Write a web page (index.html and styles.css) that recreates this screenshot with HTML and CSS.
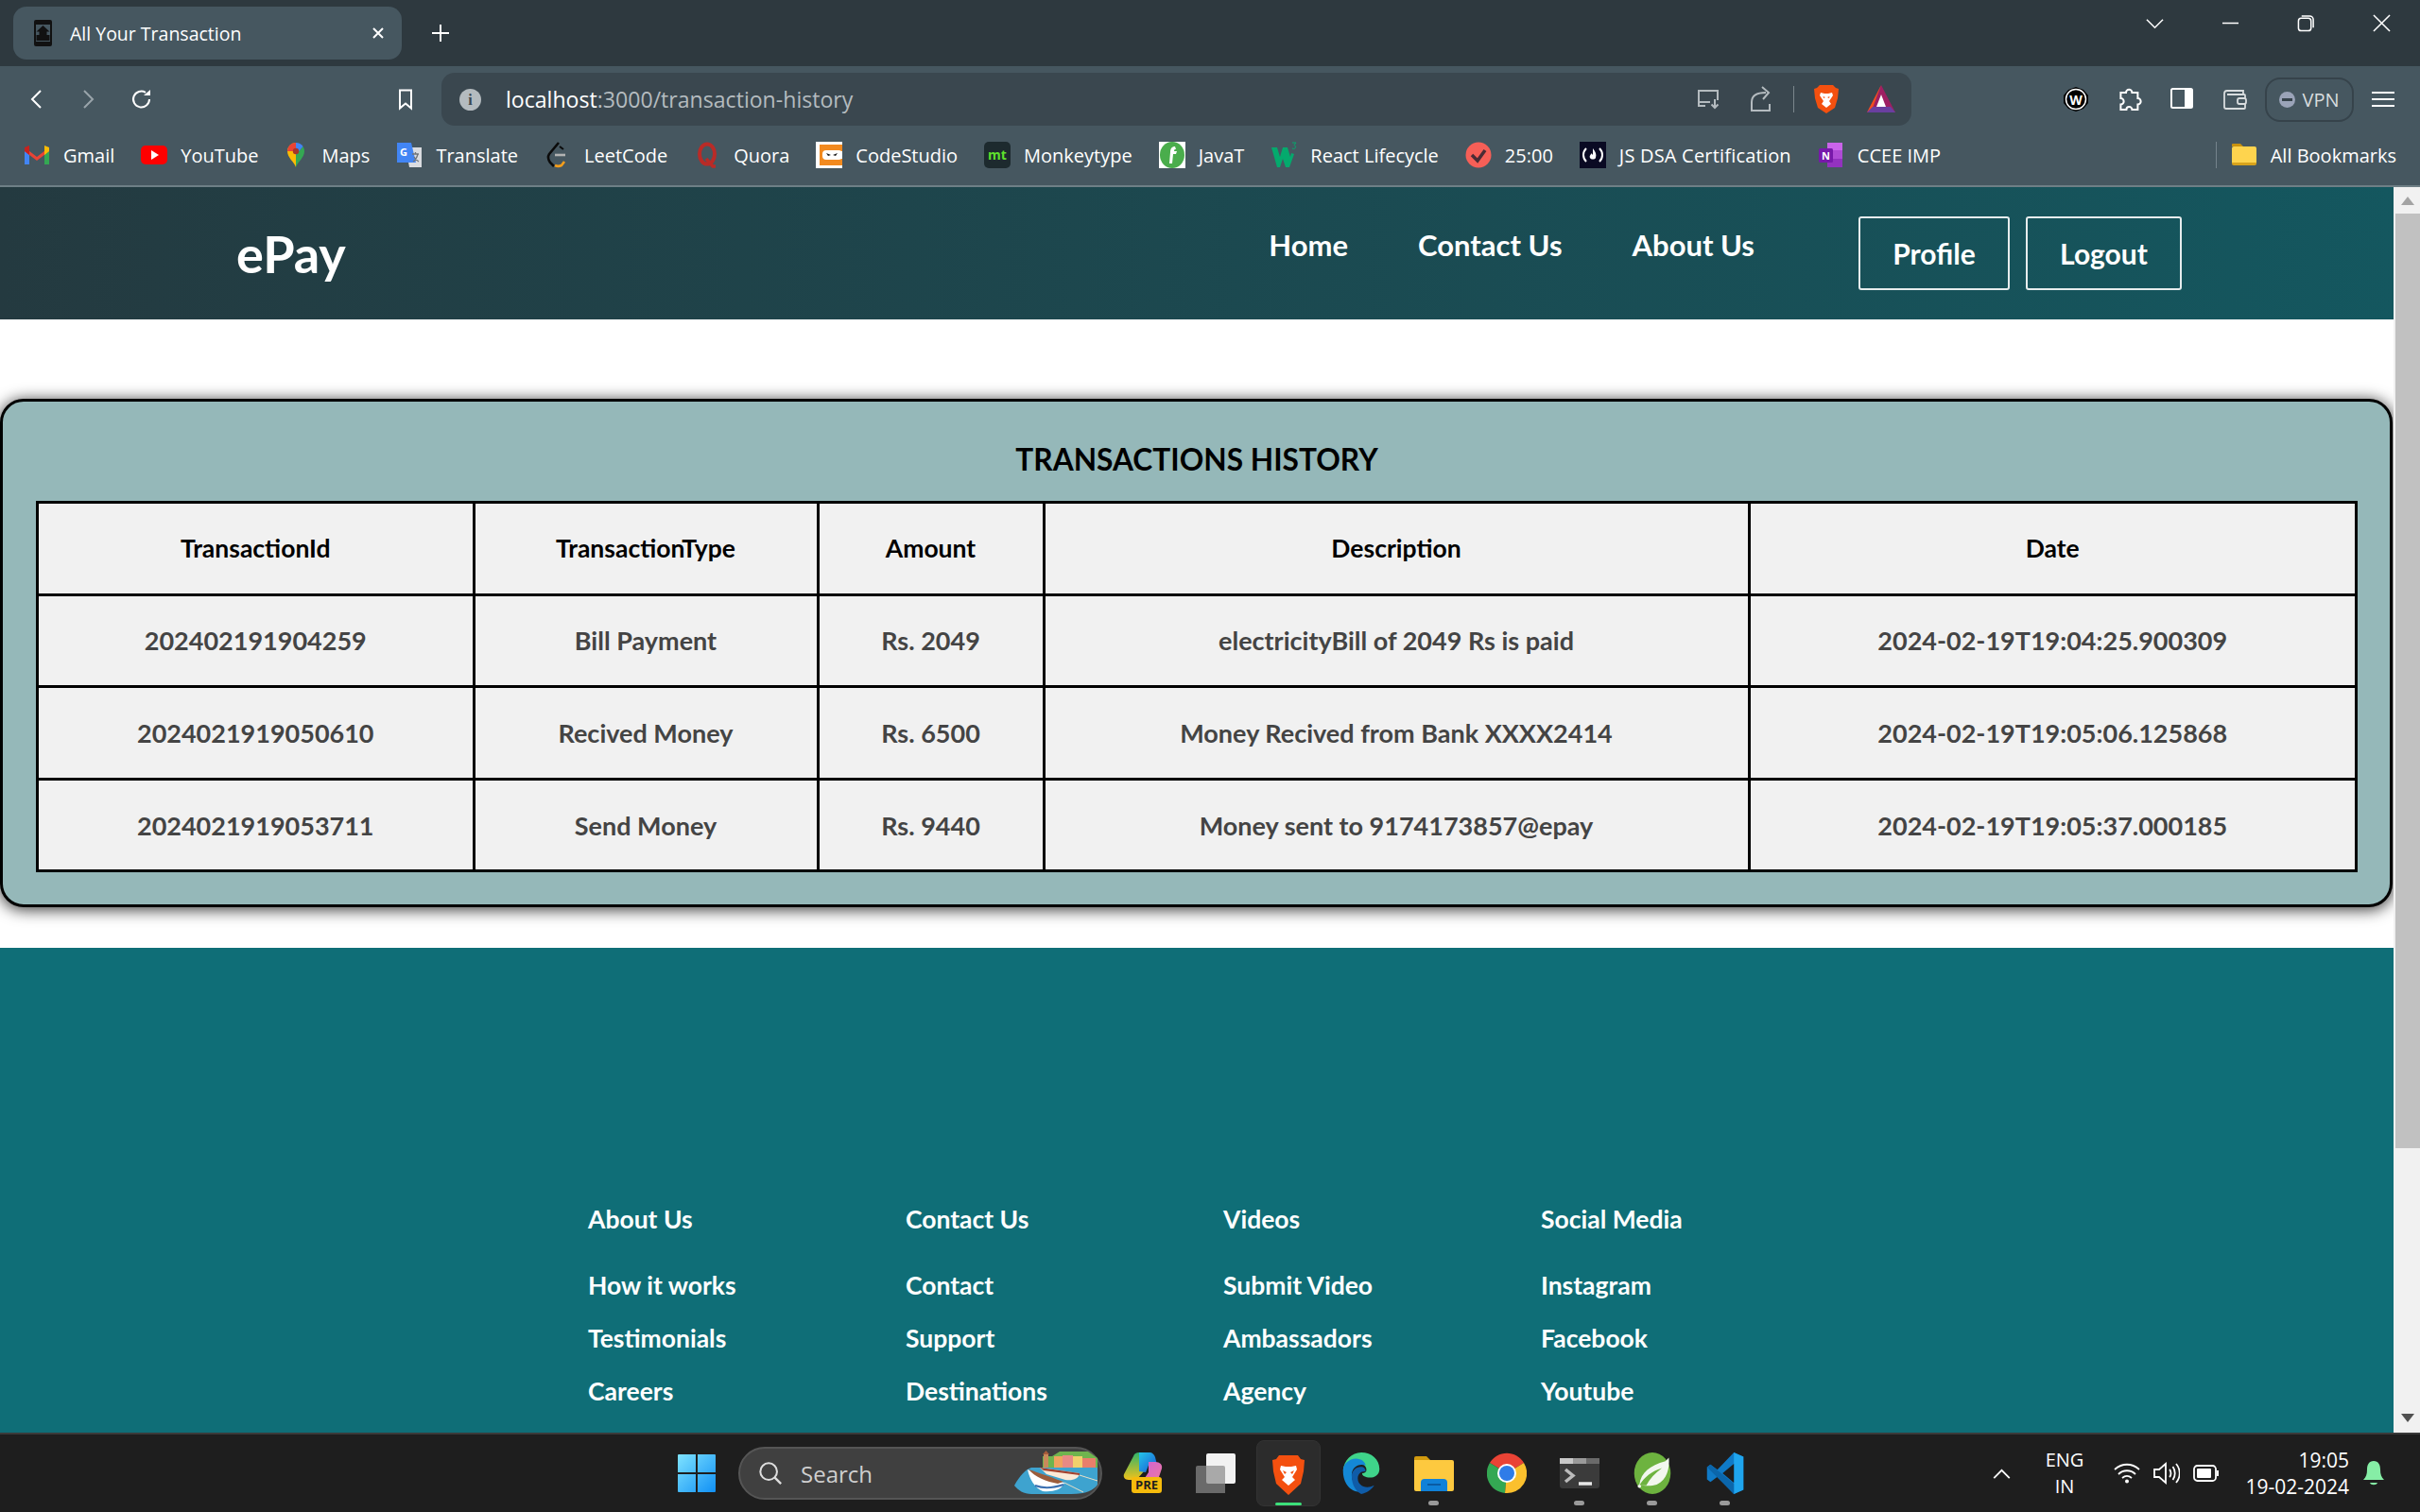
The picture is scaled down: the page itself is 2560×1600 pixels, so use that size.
FILE: index.html
```html
<!DOCTYPE html>
<html lang="en">
  <head>
    <meta charset="UTF-8" />
    <title>All Your Transaction</title>
    <link rel="stylesheet" href="styles.css">
  </head>
  <body>
    <div class="titlebar">
      <div class="tab">
        <svg class="tab-icon" viewBox="0 0 21 28"><path d="M3 1h15a1 1 0 0 1 1 1v24a1 1 0 0 1-1 1H3a1 1 0 0 1-1-1V2a1 1 0 0 1 1-1z" fill="none" stroke="#111" stroke-width="2"/><path d="M2 2h17v3H2zM2 23h17v3H2z" fill="#111"/><path d="M10.500 6l7 6.500h-3V16h3v6h-14v-6h3v-3.500h-3z" fill="#111"/></svg>
        <span class="tab-title">All Your Transaction</span>
        <svg class="tab-close" viewBox="0 0 14 14"><path d="M2 2l10 10M12 2L2 12" stroke="#fff" stroke-width="2"/></svg>
      </div>
      <svg class="new-tab" viewBox="0 0 20 20"><path d="M10 1v18M1 10h18" stroke="#fff" stroke-width="2"/></svg>
      <div class="window-controls">
        <svg viewBox="0 0 20 20"><path d="M1 6l9 9 9-9" fill="none" stroke="#fff" stroke-width="1.6"/></svg>
        <svg viewBox="0 0 20 20"><path d="M1 10h18" stroke="#fff" stroke-width="1.6"/></svg>
        <svg viewBox="0 0 20 20"><rect x="1.5" y="4.5" width="14" height="14" rx="3" fill="none" stroke="#fff" stroke-width="1.6"/><path d="M5 2h9a4 4 0 0 1 4 4v9" fill="none" stroke="#fff" stroke-width="1.6"/></svg>
        <svg viewBox="0 0 20 20"><path d="M1 1l18 18M19 1L1 19" stroke="#fff" stroke-width="1.6"/></svg>
      </div>
    </div>

    <div class="toolbar">
      <svg class="tool tool-back" viewBox="0 0 24 24"><path d="M16 3l-9 9 9 9" fill="none" stroke="#fff" stroke-width="2"/></svg>
      <svg class="tool tool-forward" viewBox="0 0 24 24"><path d="M8 3l9 9-9 9" fill="none" stroke="#99a4aa" stroke-width="2"/></svg>
      <svg class="tool tool-reload" viewBox="0 0 24 24"><path d="M20 12a8.500 8.500 0 1 1-4-7.200" fill="none" stroke="#fff" stroke-width="2"/><path d="M14 8h7V2z" fill="#fff"/></svg>
      <svg class="tool tool-bookmark" viewBox="0 0 24 24"><path d="M6 2.500h12v19l-6-5-6 5z" fill="none" stroke="#fff" stroke-width="2"/></svg>
      <div class="addressbar">
        <span class="info-dot">i</span>
        <span class="url"><b>localhost</b>:3000/transaction-history</span>
        <div class="address-actions">
          <svg class="addr-cast" viewBox="0 0 28 28"><path d="M11 21H4V5h20v10M4 17h12" fill="none" stroke="#b4bbbf" stroke-width="2"/><path d="M21 14v9m-3.500-3.500l3.500 3.500 3.500-3.500" fill="none" stroke="#b4bbbf" stroke-width="2"/></svg>
          <svg class="addr-share" viewBox="0 0 28 28"><path d="M4 26h20v-7M5 25V17c0-6 5-10 15-10" fill="none" stroke="#b4bbbf" stroke-width="2"/><path d="M16 1l7 6-6 7" fill="none" stroke="#b4bbbf" stroke-width="2"/></svg>
          <span class="addr-sep"></span>
          <svg class="addr-brave" viewBox="0 0 28 32"><path d="M7 1h14l3 3 3 1-1 10-3 10-9 6-9-6-3-10L1 5l3-1z" fill="#f4500f"/><path d="M8 9l4 1h4l4-1 1 3-4 6 2 3-5 4-5-4 2-3-4-6z" fill="#fff"/><path d="M10.500 13l2.500 1-2 1zM17.500 13l-2.500 1 2 1z" fill="#f4500f"/></svg>
          <svg class="addr-rewards" viewBox="0 0 32 32"><path d="M16 1L31 30H1z" fill="#9e1f63"/><path d="M16 1L1 30l6-5z" fill="#f0501e"/><path d="M1 30h30l-5-6H7z" fill="#6a3fa0"/><path d="M16 11l5 13H11z" fill="#fff"/></svg>
        </div>
      </div>
      <div class="toolbar-right">
        <svg class="tool-ext" viewBox="0 0 28 28"><path d="M14 1l8 3 5 6v8l-5 6-8 3-8-3-5-6v-8l5-6z" fill="#000"/><circle cx="14" cy="14" r="10.500" fill="none" stroke="#fff" stroke-width="1.500"/><text class="wolf-text" x="14" y="19.500" text-anchor="middle">W</text></svg>
        <svg class="tool-ext" viewBox="0 0 28 28"><path d="M11 7a3.200 3.200 0 1 1 6.400 0h6v6a3 3 0 1 1 0 6.500v5.500h-6a3 3 0 0 0-6 0h-6v-5.500a3.200 3.200 0 0 0 0-6.500V7z" fill="none" stroke="#fff" stroke-width="2"/></svg>
        <svg class="tool-ext" viewBox="0 0 28 28"><rect x="3" y="3" width="22" height="20" rx="1.500" fill="none" stroke="#fff" stroke-width="2"/><rect x="17" y="3" width="8" height="20" fill="#fff"/></svg>
        <svg class="tool-ext" viewBox="0 0 28 28"><path d="M3 8a3 3 0 0 1 3-3h17v4M3 8v14a2 2 0 0 0 2 2h19a1 1 0 0 0 1-1V10a1 1 0 0 0-1-1H6" fill="none" stroke="#d8dcde" stroke-width="1.800"/><rect x="17" y="13" width="9" height="6" rx="2" fill="#465760" stroke="#d8dcde" stroke-width="1.800"/></svg>
        <div class="vpn"><span class="vpn-dot"></span>VPN</div>
        <svg class="tool-menu" viewBox="0 0 24 18"><path d="M0 2h24M0 9h24M0 16h24" stroke="#fff" stroke-width="1.800"/></svg>
      </div>
    </div>

    <div class="bookmarks">
      <a class="bm bm-gmail"><svg viewBox="0 0 28 28"><path d="M1 8v16h5V12z" fill="#4285f4"/><path d="M22 12v12h5V8z" fill="#34a853"/><path d="M1 6l13 10L27 6v4L14 20 1 10z" fill="#ea4335"/><path d="M22 4l5 2v4l-5 4z" fill="#fbbc04"/><path d="M1 6l5-2v10l-5-4z" fill="#c5221f"/></svg>Gmail</a>
      <a class="bm bm-yt"><svg viewBox="0 0 28 28"><rect y="4" width="28" height="20" rx="5" fill="#f00"/><path d="M11 9l8 5-8 5z" fill="#fff"/></svg>YouTube</a>
      <a class="bm bm-maps"><svg viewBox="0 0 28 28"><path d="M14 27c-2-6-9-10-9-17a9 9 0 0 1 9-9z" fill="#fbbc04"/><path d="M14 27c2-6 9-10 9-17 0-2-.6-3.500-1.500-5L14 14z" fill="#34a853"/><path d="M14 1a9 9 0 0 1 7.500 4L14 14z" fill="#4285f4"/><path d="M7 4a9 9 0 0 1 7-3v9H5c0-2 1-4 2-6z" fill="#ea4335"/><circle cx="14" cy="10" r="3.200" fill="#a6342a"/></svg>Maps</a>
      <a class="bm bm-translate"><svg viewBox="0 0 28 28"><path d="M10 6h17v21H14z" fill="#dadce0"/><path d="M1 1h15l5 21H1z" fill="#4285f4"/><text class="gt-g" x="8" y="15" text-anchor="middle">G</text><path d="M17 13h7M20.500 11v2M18 21c3-2 4-4 5-8M19 16c1 2 3 4 5 5" fill="none" stroke="#70757a" stroke-width="1.300"/></svg>Translate</a>
      <a class="bm bm-leet"><svg viewBox="0 0 28 28"><path d="M15 1L5 13c-2 3-1 6 1 9l4 4" fill="none" stroke="#0b0b0b" stroke-width="2.600"/><path d="M20 8l-4-3" fill="none" stroke="#0b0b0b" stroke-width="2"/><path d="M21 21l-3 4c-2 1-5 1-7 0" fill="none" stroke="#f59e1c" stroke-width="2.600"/><path d="M11 14h11" stroke="#b3b3b3" stroke-width="2.600"/></svg>LeetCode</a>
      <a class="bm bm-quora"><svg viewBox="0 0 28 28"><ellipse cx="14" cy="13" rx="8" ry="10.500" fill="none" stroke="#b92b27" stroke-width="4"/><path d="M13 18l7 8h3" fill="none" stroke="#b92b27" stroke-width="3.500"/></svg>Quora</a>
      <a class="bm bm-cs"><svg viewBox="0 0 28 28"><rect width="28" height="28" fill="#fff"/><path d="M4 3h24v7H10c-2 0-2 2-2 4s0 4 2 4h18v7H4z" fill="#f28a1f"/><rect x="7" y="9" width="21" height="10" rx="4" fill="#fff"/><path d="M11 12l5 2-3 1zM23 12l-5 2 3 1z" fill="#1b1b1b"/></svg>CodeStudio</a>
      <a class="bm bm-mt"><svg viewBox="0 0 28 28"><rect width="28" height="28" rx="5" fill="#1d2a2e"/><text class="mt-text" x="14" y="19" text-anchor="middle">mt</text></svg>Monkeytype</a>
      <a class="bm bm-java"><svg viewBox="0 0 28 28"><rect width="28" height="28" fill="#fff"/><ellipse cx="14" cy="14" rx="13" ry="14" fill="#4aad4c"/><path d="M17 5c-3 0-5 2-5 6l-1 12h3l1-10h3l1-3h-3c0-2 1-2 2-2z" fill="#fff"/></svg>JavaT</a>
      <a class="bm bm-w3"><svg viewBox="0 0 28 28"><path d="M1 6h6l3 10 3-10h5l3 10 1-4 3 1-5 14h-4l-3-9-3 9H7z" fill="#04aa6d"/><path d="M23 1h4l-2 2.500c2 .5 2 4-.5 4l-1.500-.5" fill="none" stroke="#04aa6d" stroke-width="1"/></svg>React Lifecycle</a>
      <a class="bm bm-tomato"><svg viewBox="0 0 28 28"><circle cx="14" cy="14" r="13.500" fill="#f65f57"/><path d="M7 14l6 6 8-11" fill="none" stroke="#4a2c35" stroke-width="3.500"/></svg>25:00</a>
      <a class="bm bm-fcc"><svg viewBox="0 0 28 28"><rect width="28" height="28" fill="#0a0a23"/><path d="M7 7c-4 4-4 10 0 14M21 7c4 4 4 10 0 14" fill="none" stroke="#fff" stroke-width="2"/><path d="M14 7c3 4 4 6 3 10-1 2-5 2-6 0-1-2 1-4 2-5 0 2 1 2 1 1s0-3 0-6z" fill="#fff"/></svg>JS DSA Certification</a>
      <a class="bm bm-one"><svg viewBox="0 0 28 28"><path d="M10 1h16v26H10z" fill="#ca64ea"/><path d="M10 9h16v9H10z" fill="#ae4bd5"/><path d="M10 18h16v9H10z" fill="#9332bf"/><rect x="1" y="7" width="15" height="15" rx="1.500" fill="#7719aa"/><text class="one-n" x="8.500" y="19" text-anchor="middle">N</text></svg>CCEE IMP</a>
      <span class="bm-sep"></span>
      <a class="bm bm-all"><svg viewBox="0 0 28 28"><path d="M1 3a1 1 0 0 1 1-1h8l3 3H1z" fill="#c8920f"/><rect x="1" y="5" width="26" height="19" rx="2" fill="#fed44e"/><path d="M1 22h26v1a2 2 0 0 1-2 2H3a2 2 0 0 1-2-2z" fill="#d8a31c"/></svg>All Bookmarks</a>
    </div>

    <div class="viewport">
      <div class="page">
        <nav class="navbar">
          <a class="logo">ePay</a>
          <ul class="nav-links">
            <li>Home</li>
            <li>Contact Us</li>
            <li>About Us</li>
          </ul>
          <div class="nav-buttons">
            <button class="btn btn-profile">Profile</button>
            <button class="btn btn-logout">Logout</button>
          </div>
        </nav>

        <section class="history-card">
          <h2>TRANSACTIONS HISTORY</h2>
          <table class="history-table">
            <colgroup>
              <col class="col-id" /><col class="col-type" /><col class="col-amount" /><col class="col-desc" /><col class="col-date" />
            </colgroup>
            <thead>
              <tr>
                <th>TransactionId</th>
                <th>TransactionType</th>
                <th>Amount</th>
                <th>Description</th>
                <th>Date</th>
              </tr>
            </thead>
            <tbody>
              <tr>
                <td>202402191904259</td>
                <td>Bill Payment</td>
                <td>Rs. 2049</td>
                <td>electricityBill of 2049 Rs is paid</td>
                <td>2024-02-19T19:04:25.900309</td>
              </tr>
              <tr>
                <td>2024021919050610</td>
                <td>Recived Money</td>
                <td>Rs. 6500</td>
                <td>Money Recived from Bank XXXX2414</td>
                <td>2024-02-19T19:05:06.125868</td>
              </tr>
              <tr>
                <td>2024021919053711</td>
                <td>Send Money</td>
                <td>Rs. 9440</td>
                <td>Money sent to 9174173857@epay</td>
                <td>2024-02-19T19:05:37.000185</td>
              </tr>
            </tbody>
          </table>
        </section>

        <footer class="footer">
          <div class="footer-col">
            <h4>About Us</h4>
            <a>How it works</a>
            <a>Testimonials</a>
            <a>Careers</a>
          </div>
          <div class="footer-col">
            <h4>Contact Us</h4>
            <a>Contact</a>
            <a>Support</a>
            <a>Destinations</a>
          </div>
          <div class="footer-col">
            <h4>Videos</h4>
            <a>Submit Video</a>
            <a>Ambassadors</a>
            <a>Agency</a>
          </div>
          <div class="footer-col">
            <h4>Social Media</h4>
            <a>Instagram</a>
            <a>Facebook</a>
            <a>Youtube</a>
          </div>
        </footer>
      </div>
      <div class="scrollbar">
        <span class="arrow-up"></span>
        <span class="thumb"></span>
        <span class="arrow-down"></span>
      </div>
    </div>

    <div class="taskbar">
      <svg class="start" viewBox="0 0 40 40"><defs><linearGradient id="winblue" x1="0" y1="0" x2="1" y2="1"><stop offset="0" stop-color="#7fe3ff"/><stop offset="1" stop-color="#1090f5"/></linearGradient></defs><path d="M0 1a1 1 0 0 1 1-1h18v19H0zM21 0h18a1 1 0 0 1 1 1v18H21zM0 21h19v19H1a1 1 0 0 1-1-1zM21 21h19v18a1 1 0 0 1-1 1H21z" fill="url(#winblue)"/></svg>
      <div class="search">
        <svg class="search-icon" viewBox="0 0 28 28"><circle cx="12" cy="12" r="9.500" fill="none" stroke="#ddd" stroke-width="2.200"/><path d="M19 19l7 7" stroke="#ddd" stroke-width="2.600"/></svg>
        <span>Search</span>
      </div>
      <svg class="search-art" viewBox="0 0 91 46"><path d="M30 18V6h10l8-5h30l10 7v10z" fill="#6fb44e"/><rect x="31" y="3" width="5" height="15" fill="#c98a5a"/><path d="M30 4l3.500-4 3.500 4z" fill="#a85c3a"/><rect x="42" y="6" width="9" height="12" fill="#f0a35e"/><rect x="51" y="5" width="11" height="13" fill="#e88a85"/><rect x="62" y="6" width="10" height="12" fill="#f1d06c"/><rect x="72" y="8" width="14" height="10" fill="#e87f6b"/><path d="M0 37C6 26 12 20 18 18h70v18c-4 6-12 10-28 10H18C10 46 4 42 0 37z" fill="#3ea3cf"/><path d="M27 18l42 6c-1 6-7 8-15 7l-20-6z" fill="#fbe9d6"/><path d="M27 18l42 6v2l-38-5z" fill="#a3412e"/><path d="M14 20c8 4 30 12 39 14-3 8-13 10-23 9-8-3-14-13-16-23z" fill="#fff"/><path d="M15 20c10 3 29 10 37 13l-6 2c-12-2-24-7-31-15z" fill="#9b5c3b"/><path d="M22 37c8 3 18 3 30-1" fill="none" stroke="#3a6fb0" stroke-width="2"/><path d="M53 34l20 10M69 26l19 6" fill="none" stroke="#e8e0c8" stroke-width="1"/></svg>
      <svg class="tb-copilot" viewBox="0 0 42 48"><defs><linearGradient id="cp1" x1="0" y1="0" x2="1" y2="1"><stop offset="0" stop-color="#24c4e8"/><stop offset="1" stop-color="#1a58d6"/></linearGradient><linearGradient id="cp2" x1="0" y1="0" x2="0" y2="1"><stop offset="0" stop-color="#2fb36a"/><stop offset="1" stop-color="#f2c21a"/></linearGradient><linearGradient id="cp3" x1="0" y1="0" x2="1" y2="1"><stop offset="0" stop-color="#d060d8"/><stop offset="1" stop-color="#ee7a9c"/></linearGradient></defs><path d="M11 6c1-3 3-4 6-4h12l-6 19-9 10H6c-4 0-6-3-5-6z" fill="url(#cp2)"/><path d="M17 2h11c3 0 5 2 6 5l2 8-8-2-4 10-7-1z" fill="url(#cp1)"/><path d="M27 12h7c5 0 8 3 7 7l-4 12c-1 2-3 4-6 4H19l8-12z" fill="url(#cp3)"/><rect x="9" y="28" width="32" height="17" rx="3" fill="#f6bb0c"/><text class="pre-text" x="25" y="41" text-anchor="middle">PRE</text></svg>
      <svg class="tb-taskview" viewBox="0 0 42 42"><rect x="11" y="0" width="31" height="32" rx="2" fill="#f2f2f2"/><rect x="0" y="13" width="31" height="32" rx="2" fill="#8a8a8a" fill-opacity=".7"/></svg>
      <div class="tb-active">
        <svg viewBox="0 0 36 44"><path d="M8 1h20l3 4 4 1-1 12-3 13-13 12L5 31 2 18 1 6l4-1z" fill="#f4500f"/><path d="M10 12l5 1h6l5-1 1 4-5 8 3 3-7 6-7-6 3-3-5-8z" fill="#fff"/><path d="M12 17l4 2-2 2zM24 17l-4 2 2 2z" fill="#f4500f"/></svg>
        <span class="tb-green"></span>
      </div>
      <div class="tb-app">
        <svg viewBox="0 0 42 48"><path d="M21 0c12 0 21 8 21 19 0 7-6 10-11 10-5 0-9-2-9-5 3 0 5-1 5-4 0-5-6-9-13-9C8 11 2 15 0 21 1 9 10 0 21 0z" fill="#3fd48a"/><path d="M0 21c0-8 7-14 15-14 6 0 11 4 11 8-8-3-16 2-16 11 0 8 5 14 11 17 1 1 2 1 3 2C10 48 0 37 0 21z" fill="#1488d6"/><path d="M10 27c0-7 7-12 13-10 2 1 3 3 3 5-4-1-9 2-9 8 0 8 9 13 19 8-4 6-9 9-15 10-6-3-11-10-11-21z" fill="#0f5ca8"/></svg>
      </div>
      <div class="tb-app">
        <svg viewBox="0 0 42 38"><path d="M0 3a2 2 0 0 1 2-2h11l4 4H0z" fill="#d19a0e"/><path d="M0 5h40a2 2 0 0 1 2 2v29a2 2 0 0 1-2 2H2a2 2 0 0 1-2-2z" fill="#fdc93f"/><path d="M7 38V29a4 4 0 0 1 4-4h20a4 4 0 0 1 4 4v9z" fill="#1081d8"/><path d="M14 31h14" stroke="#0a5ba3" stroke-width="2"/></svg>
        <span class="tb-dot"></span>
      </div>
      <div class="tb-app">
        <svg viewBox="0 0 42 42"><path d="M21 21L3 10A21 21 0 0 1 39 10z" fill="#ea4335"/><path d="M21 21L3 10a21 21 0 0 0 16 32z" fill="#34a853"/><path d="M21 21l18-11a21 21 0 0 1-20 32z" fill="#fbc02d"/><circle cx="21" cy="21" r="10" fill="#fff"/><circle cx="21" cy="21" r="8" fill="#2f7ce8"/></svg>
      </div>
      <div class="tb-app">
        <svg viewBox="0 0 42 32"><rect width="42" height="32" rx="3" fill="#3b3b3b"/><rect width="14" height="6" fill="#c8c8c8"/><rect x="14" width="14" height="6" fill="#9a9a9a"/><rect x="28" width="14" height="6" fill="#6a6a6a"/><path d="M6 12l8 6.500-8 6.500" fill="none" stroke="#bbb" stroke-width="3.500"/><path d="M20 27h14" stroke="#e8e8e8" stroke-width="3.500"/></svg>
        <span class="tb-dot"></span>
      </div>
      <div class="tb-app">
        <svg viewBox="0 0 42 48"><ellipse cx="21" cy="24" rx="21" ry="24" fill="#6db33f"/><path d="M40 6c1 12-2 26-14 31-6 2-14 2-20 0 2-14 12-22 30-27z" fill="#f2f7ee"/><path d="M6 38c6-10 14-16 26-20-8 6-14 12-18 20z" fill="#6db33f"/><circle cx="6" cy="39" r="2" fill="#f2f7ee"/></svg>
        <span class="tb-dot"></span>
      </div>
      <div class="tb-app">
        <svg viewBox="0 0 42 48"><path d="M31 0l11 5v38l-11 5L12 28 4 34 0 31v-14l4-3 8 6z" fill="#0f7ac7"/><path d="M31 0l11 5v38l-11 5z" fill="#1fa5ee"/><path d="M31 13L18 24l13 11z" fill="#1e1e1e"/><path d="M0 17l4-3 27 22v12z" fill="#0b66ab"/></svg>
        <span class="tb-dot"></span>
      </div>

      <div class="tray">
        <svg class="tray-chevron" viewBox="0 0 20 12"><path d="M1 11l9-9 9 9" fill="none" stroke="#fff" stroke-width="2"/></svg>
        <div class="lang">ENG<br />IN</div>
        <svg class="tray-icon" viewBox="0 0 28 22"><path d="M1 7c8-7 18-7 26 0M5 12c5-5 13-5 18 0M9 16c3-2.500 7-2.500 10 0" fill="none" stroke="#fff" stroke-width="1.800"/><circle cx="14" cy="19.500" r="2" fill="#fff"/></svg>
        <svg class="tray-icon" viewBox="0 0 28 24"><path d="M1 8h5l7-6v20l-7-6H1z" fill="none" stroke="#fff" stroke-width="1.800"/><path d="M17 8c2 2 2 6 0 8M20.500 5c3 4 3 10 0 14M24 2c5 6 5 14 0 20" fill="none" stroke="#fff" stroke-width="1.800"/></svg>
        <svg class="tray-icon" viewBox="0 0 28 20"><rect x="1" y="2" width="23" height="16" rx="3.500" fill="none" stroke="#fff" stroke-width="1.800"/><rect x="4" y="5" width="15" height="10" rx="1" fill="#fff"/><path d="M25 7h2v6h-2z" fill="#fff"/></svg>
        <div class="clock">19:05<br />19-02-2024</div>
        <svg class="tray-bell" viewBox="0 0 24 28"><path d="M12 1c5 0 7 4 7 9 0 5 1 8 4 11H1c3-3 4-6 4-11 0-5 2-9 7-9z" fill="#86eea6"/><path d="M8 24h8c-1 3-7 3-8 0z" fill="#86eea6"/></svg>
      </div>
    </div>
  </body>
</html>
```

FILE: styles.css
```css
* {
  box-sizing: border-box;
}

html,
body {
  margin: 0;
  height: 1600px;
  overflow: hidden;
}

body {
  font-family: "Open Sans", sans-serif;
  display: flex;
  flex-direction: column;
  background: #1e1e1e;
}

svg {
  display: block;
  flex-shrink: 0;
}

/* browser top */
.titlebar {
  height: 70px;
  background: #2e393f;
  display: flex;
  align-items: flex-start;
  padding-left: 14px;
}

.tab {
  width: 411px;
  height: 56px;
  margin-top: 7px;
  background: #465760;
  border-radius: 14px;
  display: flex;
  align-items: center;
  padding: 0 18px 0 21px;
  color: #fff;
}

.tab-icon {
  width: 21px;
  height: 28px;
}

.tab-title {
  margin-left: 18px;
  font-size: 19.5px;
  flex: 1;
}

.tab-close {
  width: 14px;
  height: 14px;
}

.new-tab {
  width: 20px;
  height: 20px;
  margin: 25px 0 0 31px;
}

.window-controls {
  margin-left: auto;
  display: flex;
  gap: 61px;
  padding: 15px 31px 0 0;
}

.window-controls svg {
  width: 19px;
  height: 19px;
}

.toolbar {
  height: 70px;
  background: #465760;
  display: flex;
  align-items: center;
}

.tool {
  width: 24px;
  height: 24px;
}

.tool-back {
  margin-left: 27px;
}

.tool-forward {
  margin-left: 30px;
}

.tool-reload {
  margin-left: 33px;
}

.tool-bookmark {
  margin-left: 255px;
  height: 28px;
}

.addressbar {
  width: 1555px;
  height: 56px;
  margin-left: 26px;
  background: #3a474f;
  border-radius: 14px;
  display: flex;
  align-items: center;
  padding-left: 19px;
}

.info-dot {
  width: 23px;
  height: 23px;
  border-radius: 50%;
  background: #b4bbbf;
  color: #3a474f;
  font: bold 16px/23px "Liberation Serif", serif;
  text-align: center;
}

.url {
  margin-left: 26px;
  font-size: 23.1px;
  color: #b4bbbf;
}

.url b {
  font-weight: 400;
  color: #fff;
}

.address-actions {
  margin-left: auto;
  display: flex;
  align-items: center;
}

.addr-cast {
  width: 28px;
  height: 28px;
  margin-right: 27px;
}

.addr-share {
  width: 28px;
  height: 28px;
  margin-right: 21px;
}

.addr-sep {
  width: 1px;
  height: 28px;
  background: #7a868c;
  margin-right: 20px;
}

.addr-brave {
  width: 28px;
  height: 32px;
  margin-right: 28px;
}

.addr-rewards {
  width: 32px;
  height: 32px;
  margin-right: 16px;
}

.toolbar-right {
  flex: 1;
  display: flex;
  align-items: center;
  padding-left: 160px;
}

.tool-ext {
  width: 28px;
  height: 28px;
  margin-right: 28px;
}

.wolf-text {
  font: bold 14px "Open Sans", sans-serif;
  fill: #fff;
}

.vpn {
  width: 94px;
  height: 47px;
  margin-left: -10px;
  border: 2px solid #36434b;
  border-radius: 16px;
  display: flex;
  align-items: center;
  justify-content: center;
  gap: 7px;
  color: #d8dcde;
  font-size: 20px;
}

.vpn-dot {
  width: 17px;
  height: 17px;
  border-radius: 50%;
  background: #9aa3b8;
  position: relative;
}

.vpn-dot::after {
  content: "";
  position: absolute;
  left: 3px;
  right: 3px;
  top: 7px;
  height: 3px;
  background: #36434b;
}

.tool-menu {
  width: 24px;
  height: 18px;
  margin-left: 19px;
}

/* bookmarks bar */
.bookmarks {
  height: 58px;
  padding: 0 25px 8px 25px;
  background: #465760;
  border-bottom: 2px solid #6e7f86;
  display: flex;
  align-items: center;
  gap: 28px;
  color: #fff;
  font-size: 20px;
}

.bm {
  display: flex;
  align-items: center;
  gap: 14px;
  white-space: nowrap;
}

.bm svg {
  width: 28px;
  height: 28px;
}

.bm-maps {
  margin-left: -3px;
}

.bm-fcc {
  letter-spacing: 0.2px;
}

.gt-g {
  font: bold 11px "Open Sans", sans-serif;
  fill: #fff;
}

.mt-text {
  font: bold 14px "Open Sans", sans-serif;
  fill: #5ee02c;
}

.one-n {
  font: bold 11px "Open Sans", sans-serif;
  fill: #fff;
}

.bm-sep {
  width: 1px;
  height: 28px;
  background: #74838b;
  margin-left: auto;
}

.bm-all {
  margin-left: -13px;
}

/* page */
.viewport {
  height: 1320px;
  display: flex;
  overflow: hidden;
  border-bottom: 2px solid #3a3a3a;
}

.page {
  width: 2532px;
  background: #fff;
  font-family: "Lato", sans-serif;
  font-weight: 700;
}

.navbar {
  height: 140px;
  background: linear-gradient(90deg, #243a40, #14575f);
  display: flex;
  align-items: center;
  padding: 0 224px 0 250px;
  color: #fff;
}

.logo {
  font-size: 54px;
}

.nav-links {
  list-style: none;
  margin: 0 0 18px auto;
  padding: 0;
  display: flex;
  gap: 74px;
  font-size: 31px;
}

.nav-buttons {
  margin-left: 110px;
  display: flex;
  gap: 17px;
}

.btn {
  height: 78px;
  padding: 0;
  background: transparent;
  border: 2px solid #e6eced;
  border-radius: 3px;
  color: #fff;
  font: inherit;
  font-size: 30px;
}

.btn-profile {
  width: 160px;
}

.btn-logout {
  width: 165px;
}

.history-card {
  height: 538px;
  margin: 84px 1px 43px 0;
  padding: 20px 34px 0 35px;
  background: #95b8b9;
  border: 3px solid #000;
  border-radius: 25px;
  box-shadow: 0 2px 16px 1px rgba(0, 0, 0, 0.75);
}

.history-card h2 {
  margin: 0 0 3px;
  height: 82px;
  line-height: 82px;
  text-align: center;
  font-size: 31.7px;
  color: #000;
}

.history-table {
  width: 2456px;
  border-collapse: collapse;
  table-layout: fixed;
  background: #f1f1f1;
}

.col-id {
  width: 461.5px;
}

.col-type {
  width: 364px;
}

.col-amount {
  width: 239px;
}

.col-desc {
  width: 746px;
}

.history-table th,
.history-table td {
  height: 97.6px;
  padding: 0;
  border: 3px solid #000;
  text-align: center;
  font-size: 26.5px;
}

.history-table th {
  color: #000;
}

.history-table td {
  color: #444;
  font-size: 27px;
}

.footer {
  height: 513px;
  background: #0f6e77;
  display: flex;
  padding: 0 0 0 622px;
  color: #fff;
  font-size: 26.5px;
}

.footer-col {
  width: 336px;
  padding-top: 267px;
  display: flex;
  flex-direction: column;
}

.footer-col h4 {
  margin: 0 0 30px;
  font-size: 26.5px;
  line-height: 40px;
}

.footer-col a {
  line-height: 40px;
  margin-bottom: 16px;
  white-space: nowrap;
}

.scrollbar {
  width: 28px;
  background: #f1f1f1;
  display: flex;
  flex-direction: column;
  align-items: flex-end;
}

.arrow-up {
  width: 0;
  height: 0;
  margin: 10px 6px 0 0;
  border: 7px solid transparent;
  border-top: 0;
  border-bottom: 9px solid #a3a3a3;
}

.thumb {
  width: 26px;
  height: 989px;
  margin-top: 9px;
  background: #c1c1c1;
}

.arrow-down {
  width: 0;
  height: 0;
  margin: auto 6px 11px 0;
  border: 7px solid transparent;
  border-bottom: 0;
  border-top: 9px solid #505050;
}

/* windows taskbar */
.taskbar {
  flex: 1;
  background: #1e1e1e;
  display: flex;
  align-items: center;
  padding-left: 717px;
  position: relative;
}

.start {
  width: 40px;
  height: 40px;
}

.search {
  width: 385px;
  height: 56px;
  margin-left: 24px;
  background: #404040;
  border: 2px solid #555;
  border-radius: 28px;
  display: flex;
  align-items: center;
  padding-left: 19px;
  color: #cfcfcf;
  font-size: 24px;
}

.search-icon {
  width: 26px;
  height: 26px;
  margin-right: 19px;
}

/* picture sits over the right end of the search pill */
.search-art {
  position: absolute;
  left: 1073px;
  top: 17px;
  width: 91px;
  height: 46px;
}

.pre-text {
  font: bold 13px "Open Sans", sans-serif;
  fill: #1e1e1e;
}

.tb-copilot {
  width: 42px;
  height: 48px;
  margin-left: 22px;
}

.tb-taskview {
  width: 42px;
  height: 42px;
  margin-left: 35px;
}

.tb-active {
  width: 68px;
  height: 70px;
  margin: 0 4px 0 22px;
  background: #2c2c2c;
  border: 1px solid #333;
  border-radius: 8px;
  display: flex;
  flex-direction: column;
  align-items: center;
  padding-top: 14px;
}

.tb-active svg {
  width: 36px;
  height: 44px;
}

.tb-green {
  width: 28px;
  height: 4px;
  margin-top: 7px;
  border-radius: 2px;
  background: #3ce07a;
}

.tb-app {
  width: 77px;
  height: 70px;
  display: flex;
  flex-direction: column;
  align-items: center;
  justify-content: center;
  position: relative;
}

.tb-app svg {
  width: 42px;
  height: 44px;
}

.tb-dot {
  position: absolute;
  left: 33px;
  bottom: 1px;
  width: 11px;
  height: 5px;
  border-radius: 3px;
  background: #9a9a9a;
}

.tray {
  margin-left: auto;
  display: flex;
  align-items: center;
  padding-right: 37px;
  color: #fff;
  font-size: 20px;
  line-height: 28px;
}

.tray-chevron {
  width: 19px;
  height: 11px;
  margin-right: 33px;
}

.lang {
  width: 48px;
  text-align: center;
  margin-right: 28px;
}

.tray-icon {
  width: 28px;
  height: 24px;
  margin-right: 14px;
}

.clock {
  width: 120px;
  margin: 0 14px 0 3px;
  text-align: right;
  white-space: nowrap;
  font-size: 21px;
}

.tray-bell {
  width: 24px;
  height: 28px;
}
```
